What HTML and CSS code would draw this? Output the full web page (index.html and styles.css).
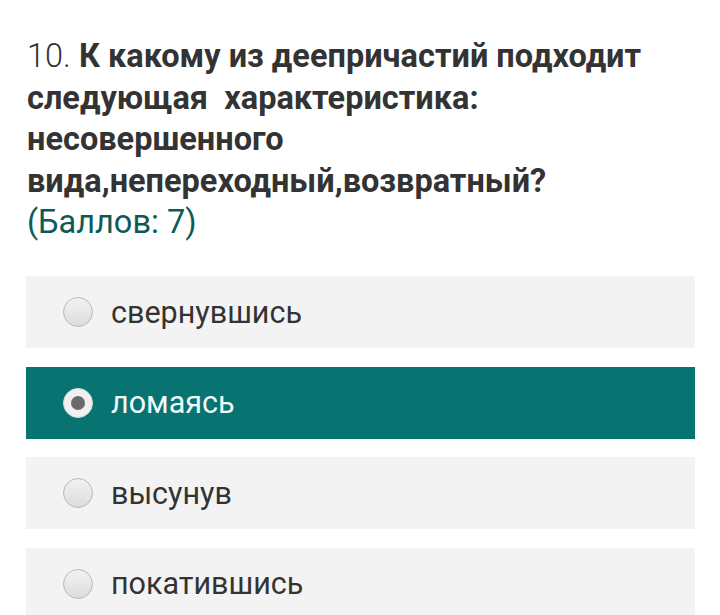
FILE: index.html
```html
<!DOCTYPE html>
<html>
<head>
<meta charset="utf-8">
<link rel="stylesheet" href="styles.css">
</head>
<body>
<div class="page">
  <div class="question">
    <span class="num">10.</span> <span class="qtext">К какому из деепричастий подходит следующая&nbsp; характеристика: несовершенного вида,непереходный,возвратный?</span>
    <div class="points">(Баллов: 7)</div>
  </div>
  <div class="options">
    <label class="option"><span class="radio"></span><span class="label">свернувшись</span></label>
    <label class="option selected"><span class="radio"><span class="dot"></span></span><span class="label">ломаясь</span></label>
    <label class="option"><span class="radio"></span><span class="label">высунув</span></label>
    <label class="option"><span class="radio"></span><span class="label">покатившись</span></label>
  </div>
</div>
</body>
</html>
```
FILE: styles.css
```css
html, body {
  margin: 0;
  padding: 0;
  background: #ffffff;
}
body {
  font-family: Roboto, "Noto Sans", sans-serif;
  color: #333333;
  overflow: hidden;
  height: 615px;
}
.page {
  padding: 36px 25px 0 26px;
}
.question {
  font-size: 32.5px;
  line-height: 41.5px;
  padding-left: 1px;
}
.num {
  font-weight: 300;
}
.qtext {
  font-weight: 700;
}
.points {
  color: #0d5b57;
  font-weight: 400;
}
.options {
  margin-top: 32.5px;
  display: flex;
  flex-direction: column;
  gap: 18.5px;
}
.option {
  display: flex;
  align-items: center;
  height: 72px;
  background: #f3f3f3;
  padding-left: 37px;
  font-size: 30.5px;
  color: #333333;
}
.option.selected {
  background: #077472;
  color: #eefafa;
}
.radio {
  width: 28px;
  height: 28px;
  border-radius: 50%;
  border: 1px solid #b9b9b9;
  background: linear-gradient(#f2f2f2, #dcdcdc);
  margin-right: 18px;
  display: flex;
  align-items: center;
  justify-content: center;
  flex-shrink: 0;
}
.selected .radio {
  background: #f0f0f0;
  border-color: #d8d8d8;
}
.dot {
  width: 14px;
  height: 14px;
  border-radius: 50%;
  background: #6a6a6a;
}
```
